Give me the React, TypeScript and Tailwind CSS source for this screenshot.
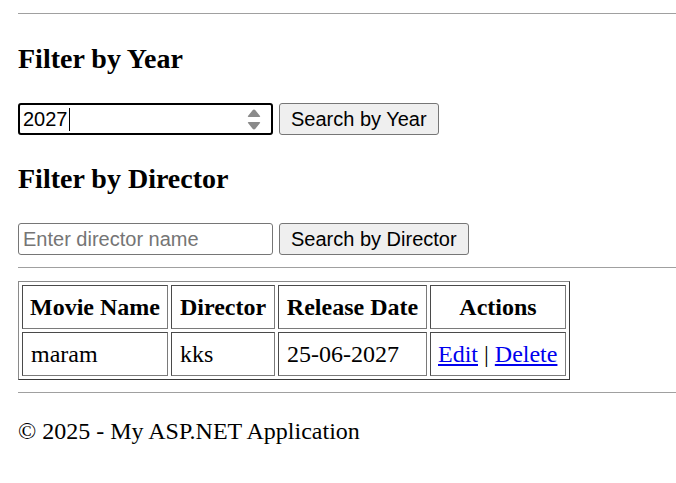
import React from 'react';

const serif = { fontFamily: '"Liberation Serif", "Times New Roman", serif' };
const sans = { fontFamily: '"Liberation Sans", Arial, sans-serif' };

const movies = [{ name: 'maram', director: 'kks', date: '25-06-2027' }];

function Spinner() {
  return (
    <svg width="14" height="22" viewBox="0 0 14 22" className="absolute right-[10px] top-[4px]">
      <path d="M7 0.5 Q7.8 0.5 8.4 1.3 L13 7 Q13.6 8 12.4 8 L1.6 8 Q0.4 8 1 7 L5.6 1.3 Q6.2 0.5 7 0.5 Z" fill="#8a8a8a" />
      <path d="M7 20.5 Q7.8 20.5 8.4 19.7 L13 14 Q13.6 13 12.4 13 L1.6 13 Q0.4 13 1 14 L5.6 19.7 Q6.2 20.5 7 20.5 Z" fill="#8a8a8a" />
    </svg>
  );
}

export default function App() {
  const btn =
    'h-[32px] rounded-[3px] border border-[#767676] bg-[#efefef] px-[11px] text-[20px] leading-[30px] text-black';
  const cell =
    'border border-t-[#4a4a4a] border-l-[#4a4a4a] border-b-[#7a7a7a] border-r-[#7a7a7a] px-[7px] py-[7px] whitespace-nowrap';
  const th = cell + ' text-center font-bold';
  const td = cell + ' text-left';

  return (
    <div className="min-h-[483px] w-[676px] overflow-hidden bg-white pl-[18px] text-[24px] leading-[28px] text-black" style={serif}>
      <div className="mt-[13px] h-px bg-[#a0a0a0]" />

      <h3 className="mt-[29px] text-[28px] font-bold leading-[32px]">Filter by Year</h3>
      <div className="mt-[28px] flex items-center gap-[6px]" style={sans}>
        <div className="relative h-[32px] w-[255px] rounded-[3px] border-2 border-black bg-white">
          <div className="flex h-full items-center pl-[3px] text-[20px] leading-[24px]">
            2027<span className="ml-px inline-block h-[23px] w-px bg-black" />
          </div>
          <Spinner />
        </div>
        <button className={btn}>Search by Year</button>
      </div>

      <h3 className="mt-[28px] text-[28px] font-bold leading-[32px]">Filter by Director</h3>
      <div className="mt-[28px] flex items-center gap-[6px]" style={sans}>
        <input
          type="text"
          placeholder="Enter director name"
          className="h-[32px] w-[255px] rounded-[3px] border border-[#767676] bg-white pl-[4px] text-[20px] text-black outline-none placeholder:text-[#757575]"
          style={sans}
        />
        <button className={btn} style={sans}>Search by Director</button>
      </div>

      <div className="mt-[12px] h-px bg-[#a0a0a0]" />

      <table className="mt-[13px] table-fixed border-separate border-spacing-[3px] border border-t-[#8a8a8a] border-l-[#8a8a8a] border-b-[#3a3a3a] border-r-[#3a3a3a]">
        <thead>
          <tr>
            <th className={th + ' w-[146px]'}>Movie Name</th>
            <th className={th + ' w-[104px]'}>Director</th>
            <th className={th + ' w-[149px]'}>Release Date</th>
            <th className={th + ' w-[136px]'}>Actions</th>
          </tr>
        </thead>
        <tbody>
          {movies.map((m) => (
            <tr key={m.name}>
              <td className={td + ' pl-[8px]'}>{m.name}</td>
              <td className={td + ' pl-[8px]'}>{m.director}</td>
              <td className={td + ' pl-[8px]'}>{m.date}</td>
              <td className={td + ' pl-[7px]'}>
                <a href="#" className="text-[#0000ee] underline">Edit</a> |{' '}
                <a href="#" className="text-[#0000ee] underline">Delete</a>
              </td>
            </tr>
          ))}
        </tbody>
      </table>

      <div className="mt-[12px] h-px bg-[#a0a0a0]" />

      <footer className="mt-[24px]">© 2025 - My ASP.NET Application</footer>
    </div>
  );
}
